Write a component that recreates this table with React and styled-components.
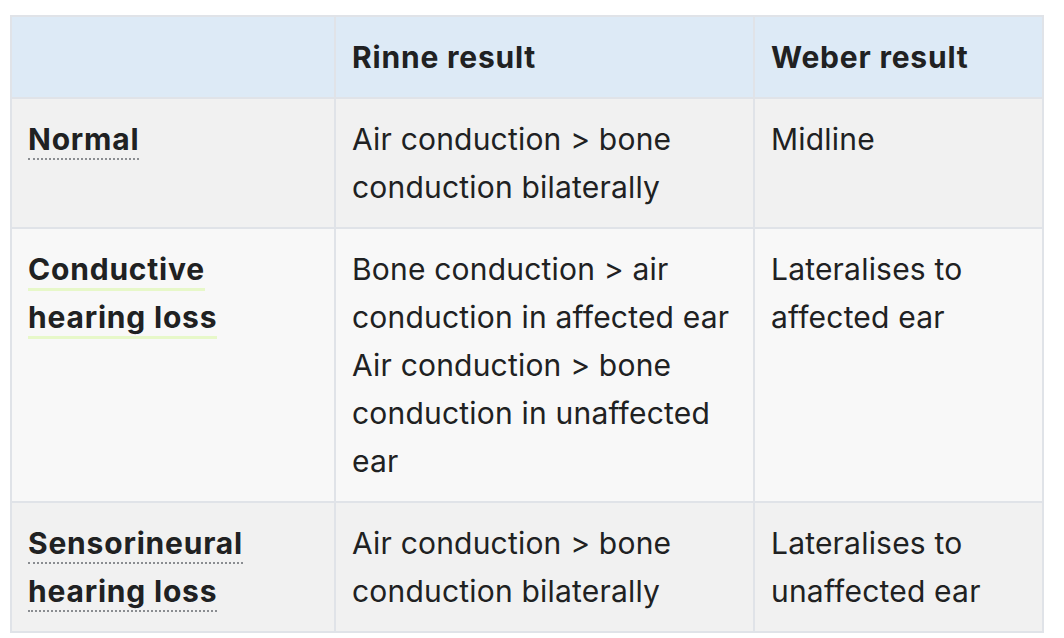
import React from "react";
import styled, { createGlobalStyle } from "styled-components";

const Global = createGlobalStyle`
  html, body { margin: 0; padding: 0; background: #ffffff; }
  body { font-family: Inter, "Noto Sans", "Liberation Sans", sans-serif; color: #202122; }
`;

const Page = styled.div`
  padding: 15px 22px 0 10px;
`;

const Table = styled.table`
  width: 1032px;
  border-collapse: collapse;
  border: 2px solid #e0e3e8;
  font-size: 30px;
  line-height: 48px;
  letter-spacing: 0.2px;
  table-layout: fixed;
`;

const Col = styled.col`
  width: ${(p) => p.$w}px;
`;

const HeadCell = styled.th`
  background: #ddeaf6;
  border: 2px solid #e0e3e8;
  padding: 16px 16px 16px;
  text-align: left;
  font-weight: 700;
  letter-spacing: 0.8px;
  vertical-align: top;
`;

const Row = styled.tr`
  background: ${(p) => (p.$alt ? "#f8f8f8" : "#f1f1f1")};
`;

const Cell = styled.td`
  border: 2px solid #e0e3e8;
  padding: 16px;
  vertical-align: top;
  font-weight: ${(p) => (p.$bold ? 700 : 400)};
  letter-spacing: ${(p) => (p.$bold ? "0.8px" : "0.2px")};
`;

const Term = styled.span`
  border-bottom: ${(p) =>
    p.$active ? "3px solid #e7f8c9" : "2px dotted #8a8d91"};
  padding-bottom: 1px;
`;

const Line = styled.div``;

const rows = [
  {
    term: "Normal",
    rinne: ["Air conduction > bone conduction bilaterally"],
    weber: "Midline",
  },
  {
    term: "Conductive hearing loss",
    active: true,
    rinne: [
      "Bone conduction > air conduction in affected ear",
      "Air conduction > bone conduction in unaffected ear",
    ],
    weber: "Lateralises to affected ear",
  },
  {
    term: "Sensorineural hearing loss",
    rinne: ["Air conduction > bone conduction bilaterally"],
    weber: "Lateralises to unaffected ear",
  },
];

export default function App() {
  return (
    <>
      <Global />
      <Page>
        <Table>
          <colgroup>
            <Col $w={324} />
            <Col $w={419} />
            <Col $w={289} />
          </colgroup>
          <thead>
            <tr>
              <HeadCell></HeadCell>
              <HeadCell>Rinne result</HeadCell>
              <HeadCell>Weber result</HeadCell>
            </tr>
          </thead>
          <tbody>
            {rows.map((r, i) => (
              <Row key={r.term} $alt={i % 2 === 1}>
                <Cell $bold>
                  <Term $active={r.active}>{r.term}</Term>
                </Cell>
                <Cell>
                  {r.rinne.map((t) => (
                    <Line key={t}>{t}</Line>
                  ))}
                </Cell>
                <Cell>{r.weber}</Cell>
              </Row>
            ))}
          </tbody>
        </Table>
      </Page>
    </>
  );
}
